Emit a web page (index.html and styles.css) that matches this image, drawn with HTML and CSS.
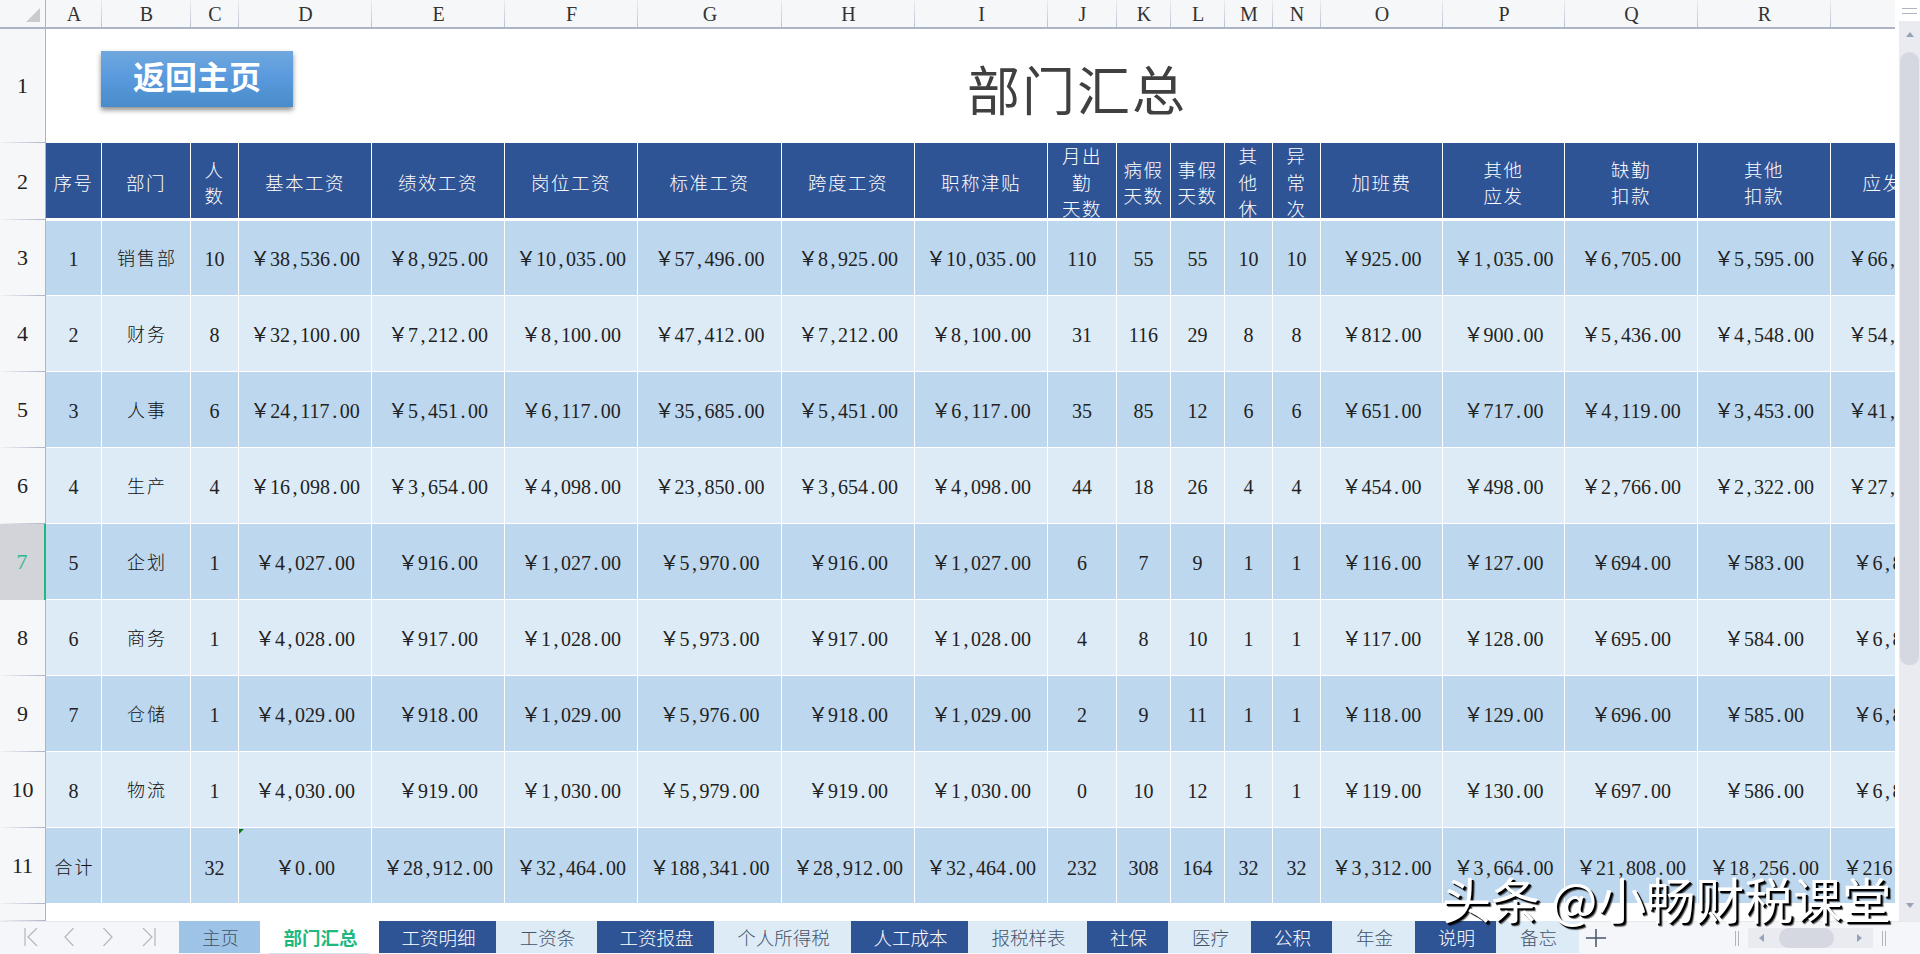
FILE: index.html
```html
<!DOCTYPE html>
<html lang="zh-CN">
<head>
<meta charset="utf-8">
<title>部门汇总</title>
<link rel="stylesheet" href="styles.css">
</head>
<body>
<div class="app">
  <div class="main">
    <div class="sheet">
      <table class="grid">
        <colgroup>
          <col class="c46"><col class="c56"><col class="c89"><col class="c48"><col class="c133"><col class="c133"><col class="c133"><col class="c144"><col class="c133"><col class="c133"><col class="c69"><col class="c54"><col class="c54"><col class="c48"><col class="c48"><col class="c122"><col class="c122"><col class="c133"><col class="c133"><col class="c144">
        </colgroup>
        <tr class="r-cols">
          <th class="corner"><svg class="corner-ico" viewBox="0 0 14 14"><path class="corner-fill" d="M14 0V14H0Z"/></svg></th>
          <th class="ch">A</th><th class="ch">B</th><th class="ch">C</th><th class="ch">D</th><th class="ch">E</th><th class="ch">F</th><th class="ch">G</th><th class="ch">H</th><th class="ch">I</th><th class="ch">J</th><th class="ch">K</th><th class="ch">L</th><th class="ch">M</th><th class="ch">N</th><th class="ch">O</th><th class="ch">P</th><th class="ch">Q</th><th class="ch">R</th><th class="ch">S</th>
        </tr>
        <tr class="r-title">
          <th class="rh">1</th>
          <td class="title" colspan="19">部门汇总</td>
        </tr>
        <tr class="r-head">
          <th class="rh">2</th>
          <td class="hd"><div class="hw">序号</div></td>
          <td class="hd"><div class="hw">部门</div></td>
          <td class="hd"><div class="hw">人<br>数</div></td>
          <td class="hd"><div class="hw">基本工资</div></td>
          <td class="hd"><div class="hw">绩效工资</div></td>
          <td class="hd"><div class="hw">岗位工资</div></td>
          <td class="hd"><div class="hw">标准工资</div></td>
          <td class="hd"><div class="hw">跨度工资</div></td>
          <td class="hd"><div class="hw">职称津贴</div></td>
          <td class="hd"><div class="hw tall">月出<br>勤<br>天数</div></td>
          <td class="hd"><div class="hw">病假<br>天数</div></td>
          <td class="hd"><div class="hw">事假<br>天数</div></td>
          <td class="hd"><div class="hw tall">其<br>他<br>休</div></td>
          <td class="hd"><div class="hw tall">异<br>常<br>次</div></td>
          <td class="hd"><div class="hw">加班费</div></td>
          <td class="hd"><div class="hw">其他<br>应发</div></td>
          <td class="hd"><div class="hw">缺勤<br>扣款</div></td>
          <td class="hd"><div class="hw">其他<br>扣款</div></td>
          <td class="hd"><div class="hw">应发工资</div></td>
        </tr>
        <tr class="r-first odd">
          <th class="rh">3</th><td>1</td><td class="cn">销售部</td><td>10</td><td>&#xFFE5;38<i class="p">,</i>536<i class="p">.</i>00</td><td>&#xFFE5;8<i class="p">,</i>925<i class="p">.</i>00</td><td>&#xFFE5;10<i class="p">,</i>035<i class="p">.</i>00</td><td>&#xFFE5;57<i class="p">,</i>496<i class="p">.</i>00</td><td>&#xFFE5;8<i class="p">,</i>925<i class="p">.</i>00</td><td>&#xFFE5;10<i class="p">,</i>035<i class="p">.</i>00</td><td>110</td><td>55</td><td>55</td><td>10</td><td>10</td><td>&#xFFE5;925<i class="p">.</i>00</td><td>&#xFFE5;1<i class="p">,</i>035<i class="p">.</i>00</td><td>&#xFFE5;6<i class="p">,</i>705<i class="p">.</i>00</td><td>&#xFFE5;5<i class="p">,</i>595<i class="p">.</i>00</td><td>&#xFFE5;66<i class="p">,</i>421<i class="p">.</i>00</td>
        </tr>
        <tr class="r-std even">
          <th class="rh">4</th><td>2</td><td class="cn">财务</td><td>8</td><td>&#xFFE5;32<i class="p">,</i>100<i class="p">.</i>00</td><td>&#xFFE5;7<i class="p">,</i>212<i class="p">.</i>00</td><td>&#xFFE5;8<i class="p">,</i>100<i class="p">.</i>00</td><td>&#xFFE5;47<i class="p">,</i>412<i class="p">.</i>00</td><td>&#xFFE5;7<i class="p">,</i>212<i class="p">.</i>00</td><td>&#xFFE5;8<i class="p">,</i>100<i class="p">.</i>00</td><td>31</td><td>116</td><td>29</td><td>8</td><td>8</td><td>&#xFFE5;812<i class="p">.</i>00</td><td>&#xFFE5;900<i class="p">.</i>00</td><td>&#xFFE5;5<i class="p">,</i>436<i class="p">.</i>00</td><td>&#xFFE5;4<i class="p">,</i>548<i class="p">.</i>00</td><td>&#xFFE5;54<i class="p">,</i>624<i class="p">.</i>00</td>
        </tr>
        <tr class="r-std odd">
          <th class="rh">5</th><td>3</td><td class="cn">人事</td><td>6</td><td>&#xFFE5;24<i class="p">,</i>117<i class="p">.</i>00</td><td>&#xFFE5;5<i class="p">,</i>451<i class="p">.</i>00</td><td>&#xFFE5;6<i class="p">,</i>117<i class="p">.</i>00</td><td>&#xFFE5;35<i class="p">,</i>685<i class="p">.</i>00</td><td>&#xFFE5;5<i class="p">,</i>451<i class="p">.</i>00</td><td>&#xFFE5;6<i class="p">,</i>117<i class="p">.</i>00</td><td>35</td><td>85</td><td>12</td><td>6</td><td>6</td><td>&#xFFE5;651<i class="p">.</i>00</td><td>&#xFFE5;717<i class="p">.</i>00</td><td>&#xFFE5;4<i class="p">,</i>119<i class="p">.</i>00</td><td>&#xFFE5;3<i class="p">,</i>453<i class="p">.</i>00</td><td>&#xFFE5;41<i class="p">,</i>136<i class="p">.</i>00</td>
        </tr>
        <tr class="r-std even">
          <th class="rh">6</th><td>4</td><td class="cn">生产</td><td>4</td><td>&#xFFE5;16<i class="p">,</i>098<i class="p">.</i>00</td><td>&#xFFE5;3<i class="p">,</i>654<i class="p">.</i>00</td><td>&#xFFE5;4<i class="p">,</i>098<i class="p">.</i>00</td><td>&#xFFE5;23<i class="p">,</i>850<i class="p">.</i>00</td><td>&#xFFE5;3<i class="p">,</i>654<i class="p">.</i>00</td><td>&#xFFE5;4<i class="p">,</i>098<i class="p">.</i>00</td><td>44</td><td>18</td><td>26</td><td>4</td><td>4</td><td>&#xFFE5;454<i class="p">.</i>00</td><td>&#xFFE5;498<i class="p">.</i>00</td><td>&#xFFE5;2<i class="p">,</i>766<i class="p">.</i>00</td><td>&#xFFE5;2<i class="p">,</i>322<i class="p">.</i>00</td><td>&#xFFE5;27<i class="p">,</i>504<i class="p">.</i>00</td>
        </tr>
        <tr class="r-std odd">
          <th class="rh sel">7</th><td>5</td><td class="cn">企划</td><td>1</td><td>&#xFFE5;4<i class="p">,</i>027<i class="p">.</i>00</td><td>&#xFFE5;916<i class="p">.</i>00</td><td>&#xFFE5;1<i class="p">,</i>027<i class="p">.</i>00</td><td>&#xFFE5;5<i class="p">,</i>970<i class="p">.</i>00</td><td>&#xFFE5;916<i class="p">.</i>00</td><td>&#xFFE5;1<i class="p">,</i>027<i class="p">.</i>00</td><td>6</td><td>7</td><td>9</td><td>1</td><td>1</td><td>&#xFFE5;116<i class="p">.</i>00</td><td>&#xFFE5;127<i class="p">.</i>00</td><td>&#xFFE5;694<i class="p">.</i>00</td><td>&#xFFE5;583<i class="p">.</i>00</td><td>&#xFFE5;6<i class="p">,</i>886<i class="p">.</i>00</td>
        </tr>
        <tr class="r-std even">
          <th class="rh">8</th><td>6</td><td class="cn">商务</td><td>1</td><td>&#xFFE5;4<i class="p">,</i>028<i class="p">.</i>00</td><td>&#xFFE5;917<i class="p">.</i>00</td><td>&#xFFE5;1<i class="p">,</i>028<i class="p">.</i>00</td><td>&#xFFE5;5<i class="p">,</i>973<i class="p">.</i>00</td><td>&#xFFE5;917<i class="p">.</i>00</td><td>&#xFFE5;1<i class="p">,</i>028<i class="p">.</i>00</td><td>4</td><td>8</td><td>10</td><td>1</td><td>1</td><td>&#xFFE5;117<i class="p">.</i>00</td><td>&#xFFE5;128<i class="p">.</i>00</td><td>&#xFFE5;695<i class="p">.</i>00</td><td>&#xFFE5;584<i class="p">.</i>00</td><td>&#xFFE5;6<i class="p">,</i>890<i class="p">.</i>00</td>
        </tr>
        <tr class="r-std odd">
          <th class="rh">9</th><td>7</td><td class="cn">仓储</td><td>1</td><td>&#xFFE5;4<i class="p">,</i>029<i class="p">.</i>00</td><td>&#xFFE5;918<i class="p">.</i>00</td><td>&#xFFE5;1<i class="p">,</i>029<i class="p">.</i>00</td><td>&#xFFE5;5<i class="p">,</i>976<i class="p">.</i>00</td><td>&#xFFE5;918<i class="p">.</i>00</td><td>&#xFFE5;1<i class="p">,</i>029<i class="p">.</i>00</td><td>2</td><td>9</td><td>11</td><td>1</td><td>1</td><td>&#xFFE5;118<i class="p">.</i>00</td><td>&#xFFE5;129<i class="p">.</i>00</td><td>&#xFFE5;696<i class="p">.</i>00</td><td>&#xFFE5;585<i class="p">.</i>00</td><td>&#xFFE5;6<i class="p">,</i>894<i class="p">.</i>00</td>
        </tr>
        <tr class="r-std even">
          <th class="rh">10</th><td>8</td><td class="cn">物流</td><td>1</td><td>&#xFFE5;4<i class="p">,</i>030<i class="p">.</i>00</td><td>&#xFFE5;919<i class="p">.</i>00</td><td>&#xFFE5;1<i class="p">,</i>030<i class="p">.</i>00</td><td>&#xFFE5;5<i class="p">,</i>979<i class="p">.</i>00</td><td>&#xFFE5;919<i class="p">.</i>00</td><td>&#xFFE5;1<i class="p">,</i>030<i class="p">.</i>00</td><td>0</td><td>10</td><td>12</td><td>1</td><td>1</td><td>&#xFFE5;119<i class="p">.</i>00</td><td>&#xFFE5;130<i class="p">.</i>00</td><td>&#xFFE5;697<i class="p">.</i>00</td><td>&#xFFE5;586<i class="p">.</i>00</td><td>&#xFFE5;6<i class="p">,</i>898<i class="p">.</i>00</td>
        </tr>
        <tr class="r-total odd">
          <th class="rh">11</th><td class="cn">合计</td><td></td><td>32</td><td class="flagged">&#xFFE5;0<i class="p">.</i>00</td><td>&#xFFE5;28<i class="p">,</i>912<i class="p">.</i>00</td><td>&#xFFE5;32<i class="p">,</i>464<i class="p">.</i>00</td><td>&#xFFE5;188<i class="p">,</i>341<i class="p">.</i>00</td><td>&#xFFE5;28<i class="p">,</i>912<i class="p">.</i>00</td><td>&#xFFE5;32<i class="p">,</i>464<i class="p">.</i>00</td><td>232</td><td>308</td><td>164</td><td>32</td><td>32</td><td>&#xFFE5;3<i class="p">,</i>312<i class="p">.</i>00</td><td>&#xFFE5;3<i class="p">,</i>664<i class="p">.</i>00</td><td>&#xFFE5;21<i class="p">,</i>808<i class="p">.</i>00</td><td>&#xFFE5;18<i class="p">,</i>256<i class="p">.</i>00</td><td>&#xFFE5;216<i class="p">,</i>253<i class="p">.</i>00</td>
        </tr>
        <tr class="r-last">
          <th class="rh"></th>
          <td class="blank" colspan="19"></td>
        </tr>
      </table>
      <a class="home-btn">返回主页</a>
    </div>
    <div class="vbar">
      <div class="vsplit"></div>
      <div class="vtrack">
        <svg class="varrow up" viewBox="0 0 8 5"><path class="arrow-fill" d="M4 0 8 5H0Z"/></svg>
        <div class="vthumb"></div>
        <svg class="varrow down" viewBox="0 0 8 5"><path class="arrow-fill" d="M0 0H8L4 5Z"/></svg>
      </div>
    </div>
  </div>
  <div class="tabbar">
    <div class="nav">
      <svg class="nav-ico" viewBox="0 0 14 18"><path class="nav-line" d="M1 0V18M13 0 4 9 13 18"/></svg>
      <svg class="nav-ico mid" viewBox="0 0 10 18"><path class="nav-line" d="M9.5 0 1 9 9.5 18"/></svg>
      <svg class="nav-ico mid" viewBox="0 0 10 18"><path class="nav-line" d="M.5 0 9 9 .5 18"/></svg>
      <svg class="nav-ico" viewBox="0 0 14 18"><path class="nav-line" d="M1 0 10 9 1 18M13 0V18"/></svg>
    </div>
    <div class="tab mid w81">主页</div>
    <div class="tab active w119">部门汇总</div>
    <div class="tab dark w117">工资明细</div>
    <div class="tab light w101">工资条</div>
    <div class="tab dark w117">工资报盘</div>
    <div class="tab light w137">个人所得税</div>
    <div class="tab dark w117">人工成本</div>
    <div class="tab light w119">报税样表</div>
    <div class="tab dark w81">社保</div>
    <div class="tab light w83">医疗</div>
    <div class="tab dark w81">公积</div>
    <div class="tab light w83">年金</div>
    <div class="tab dark w81">说明</div>
    <div class="tab light w83">备忘</div>
    <svg class="plus" viewBox="0 0 20 18"><path class="plus-line" d="M10 0V18M0 9H20"/></svg>
    <div class="hscroll">
      <div class="split"></div>
      <div class="htrack">
        <svg class="harrow" viewBox="0 0 5 8"><path class="arrow-fill" d="M5 0V8L0 4Z"/></svg>
        <div class="hthumb"></div>
        <svg class="harrow" viewBox="0 0 5 8"><path class="arrow-fill" d="M0 0 5 4 0 8Z"/></svg>
      </div>
      <div class="split"></div>
    </div>
  </div>
  <div class="watermark">头条 @小畅财税课堂</div>
</div>
</body>
</html>
```

FILE: styles.css
```css
* { box-sizing: border-box; }
html, body { margin: 0; padding: 0; height: 100%; overflow: hidden; background: #fff; }
body { font-family: "Liberation Serif", "Noto Sans CJK SC", serif; }

.app { position: relative; display: flex; flex-direction: column; width: 1920px; height: 954px; }
.main { display: flex; flex: 1; min-height: 0; }
.sheet { position: relative; flex: 1; min-width: 0; overflow: hidden; background: #fff; }

.grid { table-layout: fixed; border-collapse: separate; border-spacing: 0; width: 1975px; }
.c46 { width: 46px; } .c56 { width: 56px; } .c89 { width: 89px; } .c48 { width: 48px; }
.c133 { width: 133px; } .c144 { width: 144px; } .c69 { width: 69px; } .c54 { width: 54px; } .c122 { width: 122px; }

.r-cols { height: 29px; }
.r-title { height: 114px; }
.r-head { height: 77px; }
.r-first, .r-std, .r-total { height: 76px; }
.r-last { height: 17px; }

.corner, .ch { padding: 0; background-color: #f6f7f9; border-bottom: 2px solid #aeb4c8; font-weight: 400; }
.corner { position: relative; border-right: 1px solid #aeb4c8; }
.corner-ico { position: absolute; left: 26px; top: 8px; width: 14px; height: 14px; }
.corner-fill { fill: #c9cbcf; }
.ch { font-size: 20px; line-height: 24px; color: #333; background-image: linear-gradient(180deg, #eceef2, #bcc2d2); background-size: 1px 100%; background-position: right top; background-repeat: no-repeat; }

.rh { padding: 0; font-size: 22px; font-weight: 400; color: #222; text-align: center; background-color: #f6f7f9; border-right: 1px solid #aeb4c8; background-image: linear-gradient(90deg, #f2f3f6, #aeb4c8); background-size: 100% 1px; background-position: left bottom; background-repeat: no-repeat; }
.rh.sel { color: #29b98a; background-color: #d2d4d9; background-image: none; border-right: 2px solid #1fb87e; }

td { padding: 0; text-align: center; font-size: 20px; line-height: 24px; color: #222; border-right: 1px solid #fff; border-bottom: 1px solid #fff; white-space: nowrap; overflow: hidden; letter-spacing: 0; }
.title { padding: 4px 0 0 134px; text-align: center; font-size: 53px; line-height: normal; letter-spacing: 2px; color: #404040; font-weight: 400; background: #fff; }
.blank { background: #fff; }
.odd td { background: #bdd7ee; padding-top: 3px; }
.even td { background: #ddebf7; padding-top: 3px; }
.r-first td { border-top: 1px solid #fff; padding-top: 2px; }
.r-total td { padding-top: 4px; }
td.cn { font-size: 18px; letter-spacing: 2px; font-weight: 300; text-indent: 2px; color: #111; }
.p { display: inline-block; width: .5em; font-style: normal; text-align: center; }
.flagged { position: relative; }
.flagged::before { content: ""; position: absolute; left: 0; top: 1px; border-top: 5px solid #0b7a13; border-right: 5px solid transparent; }

.hd { background: #2f5496; color: #fff; font-size: 18.5px; letter-spacing: 1.5px; font-weight: 300; border-bottom: 2px solid #fff; }
.hw { display: flex; align-items: center; justify-content: center; flex-direction: column; height: 75px; overflow: hidden; padding-top: 7px; line-height: 26.5px; text-align: center; }
.hw.tall { justify-content: flex-start; padding-top: 1px; }

.home-btn { position: absolute; left: 101px; top: 51px; display: flex; align-items: center; justify-content: center; width: 192px; height: 56px; font-family: "Noto Sans CJK SC", sans-serif; font-weight: 700; font-size: 32px; color: #fff; background: linear-gradient(180deg, #6fa8dd, #5a9ade 45%, #4a8bca); box-shadow: 0 3px 5px rgba(0,0,0,.45); padding-bottom: 9px; }

.vbar { display: flex; flex-direction: column; width: 25px; background: #fff; }
.vsplit { height: 21px; margin: 0; position: relative; }
.vsplit::before { content: ""; position: absolute; left: 7px; top: 8px; width: 15px; height: 4px; border-top: 1px solid #aeb4c0; border-bottom: 1px solid #aeb4c0; }
.vtrack { flex: 1; display: flex; flex-direction: column; align-items: center; margin-left: 4px; background: #e9ebf0; }
.varrow { width: 8px; height: 5px; flex: none; }
.varrow.up { margin-top: 11px; margin-bottom: 15px; }
.varrow.down { margin-top: auto; margin-bottom: 13px; }
.vthumb { width: 19px; height: 613px; border-radius: 10px 10px 9px 9px; background: #d5d8e0; }
.arrow-fill { fill: #98a2b6; }

.tabbar { position: relative; display: flex; align-items: flex-start; height: 33px; flex: none; background: #f5f6f9; box-shadow: inset 0 1px 0 #e6e8ec; }
.nav { display: flex; align-items: center; width: 179px; height: 32px; padding-left: 24px; flex: none; }
.nav-ico { width: 14px; height: 18px; flex: none; }
.nav-ico.mid { width: 10px; margin: 0 29px 0 0; }
.nav-ico:first-child { margin-right: 26px; }
.nav-line { fill: none; stroke: #b4b6ba; stroke-width: 1.2; }

.tab { display: flex; align-items: center; justify-content: center; height: 32px; flex: none; padding-left: 2px; font-family: "Noto Sans CJK SC", sans-serif; font-size: 18.5px; font-weight: 300; }
.w81 { width: 81px; } .w83 { width: 83px; } .w101 { width: 101px; } .w117 { width: 117px; } .w119 { width: 119px; } .w137 { width: 137px; }
.tab.mid { background: #9dc3e6; color: #44546a; }
.tab.dark { background: #2f5496; color: #fff; }
.tab.light { background: #ddebf7; color: #44546a; }
.tab.active { position: relative; background: #fff; color: #1fb87e; font-weight: 700; }
.tab.active::after { content: ""; position: absolute; left: 9px; right: 10px; bottom: -1px; height: 1px; background: #cfe3f3; }
.plus { width: 20px; height: 18px; margin: 8px 0 0 7px; flex: none; }
.plus-line { fill: none; stroke: #44546a; stroke-width: 1.5; }

.hscroll { display: flex; align-items: center; gap: 9px; margin-left: auto; margin-right: 34px; height: 34px; }
.split { width: 4px; height: 15px; flex: none; border-left: 1px solid #aeb4c0; border-right: 1px solid #aeb4c0; }
.htrack { display: flex; align-items: center; justify-content: space-between; width: 125px; height: 20px; padding: 0 11px; background: #e9ebf0; }
.harrow { width: 5px; height: 8px; flex: none; }
.hthumb { width: 55px; height: 20px; margin-right: 8px; border-radius: 10px; background: #d5d8e0; }

.watermark { position: absolute; left: 1442px; top: 869px; font-family: "Noto Sans CJK SC", sans-serif; font-size: 49px; line-height: 58px; color: #fff; white-space: nowrap; text-shadow: 2px 2px 0 #000, 3px 3px 1px rgba(0,0,0,.6); }
```
